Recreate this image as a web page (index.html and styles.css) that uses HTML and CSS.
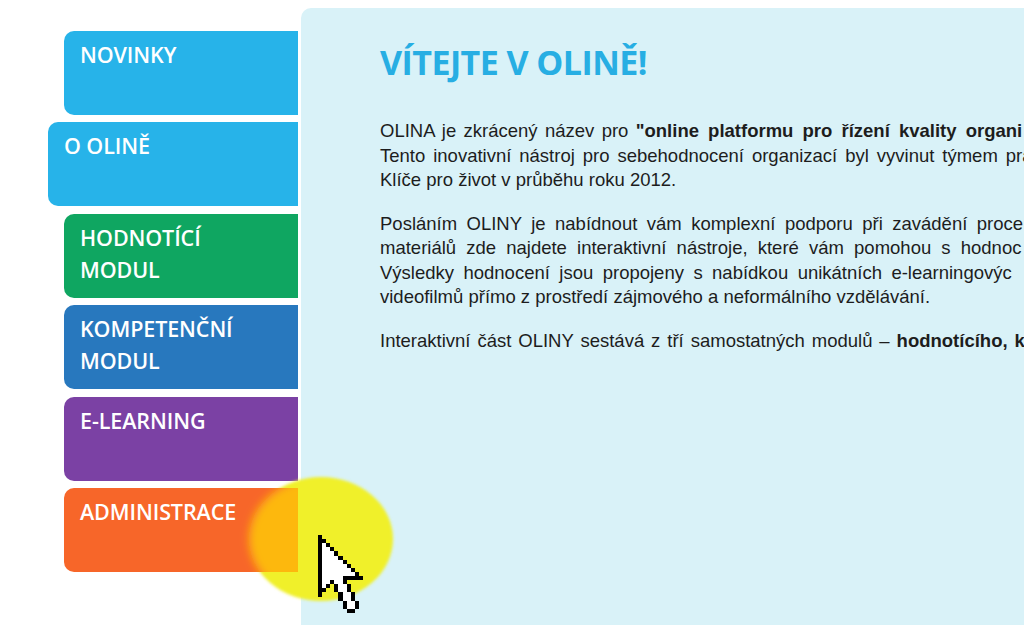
FILE: index.html
```html
<!DOCTYPE html>
<html lang="cs">
<head>
    <meta charset="UTF-8">
    <meta name="viewport" content="width=device-width, initial-scale=1.0">
    <title>OLINA</title>
    <link rel="stylesheet" href="styles.css">
</head>
<body>
    <div class="page">
        <nav class="menu">
            <a class="tab tab-blue">NOVINKY</a>
            <a class="tab tab-blue tab-active">O OLINĚ</a>
            <a class="tab tab-green">HODNOTÍCÍ MODUL</a>
            <a class="tab tab-navy">KOMPETENČNÍ MODUL</a>
            <a class="tab tab-purple">E-LEARNING</a>
            <a class="tab tab-orange">ADMINISTRACE</a>
        </nav>
        <main class="panel">
            <h1>VÍTEJTE V OLINĚ!</h1>
            <p>
                <span class="line sp-1">OLINA je zkrácený název pro <b class="sp-4">"online platformu pro řízení kvality organi</b></span>
                <span class="line sp-2">Tento inovativní nástroj pro sebehodnocení organizací byl vyvinut týmem pra</span>
                <span class="line">Klíče pro život v průběhu roku 2012.</span>
            </p>
            <p>
                <span class="line sp-3">Posláním OLINY je nabídnout vám komplexní podporu při zavádění proce</span>
                <span class="line sp-6">materiálů zde najdete interaktivní nástroje, které vám pomohou s hodnoc</span>
                <span class="line sp-3">Výsledky hodnocení jsou propojeny s nabídkou unikátních e-learningovýc</span>
                <span class="line">videofilmů přímo z prostředí zájmového a neformálního vzdělávání.</span>
            </p>
            <p>
                <span class="line sp-5">Interaktivní část OLINY sestává z tří samostatných modulů – <b>hodnotícího, k</b></span>
            </p>
        </main>
    </div>

    <!-- click highlight and mouse pointer, on top of everything -->
    <svg class="pointer" width="1024" height="625" viewBox="0 0 1024 625">
        <defs>
            <clipPath id="tab-clip"><rect x="64" y="488" width="234" height="84"/></clipPath>
            <filter id="soft"><feGaussianBlur stdDeviation="1.5"/></filter>
            <filter id="softer"><feGaussianBlur stdDeviation="4"/></filter>
        </defs>
        <ellipse cx="321" cy="539" rx="72" ry="62" fill="#f0f02a" filter="url(#soft)"/>
        <g clip-path="url(#tab-clip)">
            <rect x="241" y="488" width="57" height="84" fill="#f76629"/>
            <ellipse cx="321" cy="539" rx="72" ry="62" fill="#fdb80c" filter="url(#softer)"/>
        </g>
        <svg x="318" y="535" width="49" height="78" viewBox="0 0 12 19" preserveAspectRatio="none" shape-rendering="crispEdges">
            <path fill="#000" d="M0 0h1v1h-1zM0 1h2v1h-2zM0 2h3v1h-3zM0 3h4v1h-4zM0 4h5v1h-5zM0 5h6v1h-6zM0 6h7v1h-7zM0 7h8v1h-8zM0 8h9v1h-9zM0 9h10v1h-10zM0 10h11v1h-11zM0 11h7v1h-7zM0 12h3v1h-3zM4 12h4v1h-4zM0 13h2v1h-2zM4 13h4v1h-4zM0 14h1v1h-1zM5 14h4v1h-4zM5 15h4v1h-4zM6 16h4v1h-4zM6 17h4v1h-4zM7 18h2v1h-2z"/>
            <path fill="#fff" d="M1 2h1v1h-1zM1 3h2v1h-2zM1 4h3v1h-3zM1 5h4v1h-4zM1 6h5v1h-5zM1 7h6v1h-6zM1 8h7v1h-7zM1 9h8v1h-8zM1 10h5v1h-5zM1 11h2v1h-2zM4 11h2v1h-2zM1 12h1v1h-1zM5 12h2v1h-2zM5 13h2v1h-2zM6 14h2v1h-2zM6 15h2v1h-2zM7 16h2v1h-2zM7 17h2v1h-2z"/>
        </svg>
    </svg>
</body>
</html>
```

FILE: styles.css
```css
html, body {
    margin: 0;
    padding: 0;
    height: 100%;
    overflow: hidden;
    background: #fff;
}
.page {
    display: flex;
    height: 625px;
}
.menu {
    width: 298px;
    flex: none;
    padding-top: 31px;
    display: flex;
    flex-direction: column;
    align-items: flex-end;
    gap: 7.4px;
    box-sizing: border-box;
}
.tab {
    width: 234px;
    height: 84px;
    padding: 8px 40px 0 16px;
    box-sizing: border-box;
    border-radius: 10px 0 0 10px;
    font-family: "Open Sans", sans-serif;
    font-weight: 600;
    font-size: 21.5px;
    letter-spacing: -0.1px;
    line-height: 32px;
    color: #fff;
}
.tab-active {
    width: 250px;
}
.tab-blue { background: #27b3e9; }
.tab-green { background: #0fa661; }
.tab-navy { background: #2878be; }
.tab-purple { background: #7b41a4; }
.tab-orange { background: #f76629; }
.panel {
    flex: 1;
    margin: 8px 0 0 3px;
    padding: 32px 0 0 79px;
    background: #d9f2f8;
    border-radius: 10px 0 0 0;
    font-family: "Liberation Sans", Arial, sans-serif;
    font-size: 18.5px;
    line-height: 24.5px;
    color: #1d1d1d;
    min-width: 0;
    overflow: hidden;
}
.panel h1 {
    margin: 0 0 35px;
    font-family: "Open Sans", sans-serif;
    font-weight: 700;
    font-size: 34px;
    letter-spacing: -0.55px;
    line-height: 44px;
    color: #27aee3;
}
.panel p {
    margin: 0 0 19px;
}
.line {
    display: block;
    white-space: nowrap;
}
.sp-1 { word-spacing: 2.2px; }
.sp-2 { word-spacing: 2.8px; }
.sp-3 { word-spacing: 4.3px; }
.sp-4 { word-spacing: 4px; }
.sp-5 { word-spacing: 1.8px; }
.sp-6 { word-spacing: 5px; }
.pointer {
    position: absolute;
    left: 0;
    top: 0;
    pointer-events: none;
}
```
